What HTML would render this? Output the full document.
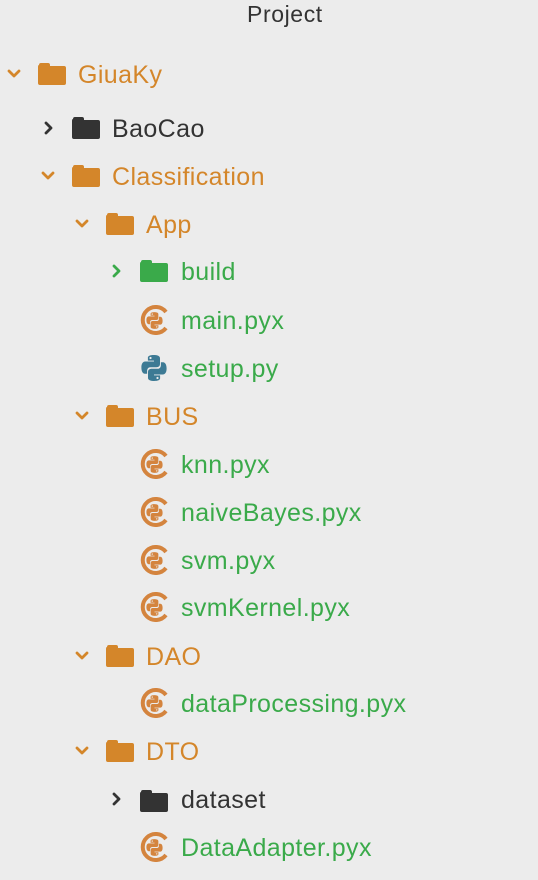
<!DOCTYPE html>
<html><head><meta charset="utf-8"><style>
body{margin:0;width:538px;height:880px;background:#ececec;font-family:"Liberation Sans",sans-serif;position:relative;overflow:hidden}
.t{position:absolute;font-size:25px;line-height:26px;letter-spacing:0.4px;white-space:nowrap;margin-top:2px}
.o{color:#d4862a}.g{color:#3aaa4a}.k{color:#333}
svg.i{position:absolute}
</style></head><body>
<svg width="0" height="0" style="position:absolute">
<defs>
<symbol id="fold" viewBox="0 0 28 22"><path d="M1 2 Q1 0 3 0 H10 Q12 0 12 2 V3 H26 Q28 3 28 5 V20 Q28 22 26 22 H2 Q0 22 0 20 V4 Q0 2 1 2Z" fill="currentColor"/></symbol>
<symbol id="down" viewBox="0 0 14 10"><path d="M2 2 L7 7 L12 2" fill="none" stroke="currentColor" stroke-width="2.8" stroke-linecap="round" stroke-linejoin="round"/></symbol>
<symbol id="right" viewBox="0 0 10 14"><path d="M2 2 L7 7 L2 12" fill="none" stroke="currentColor" stroke-width="2.8" stroke-linecap="round" stroke-linejoin="round"/></symbol>
<symbol id="py" viewBox="0 0 28 28"><path d="M13.8 1C7.5 1 7.9 3.7 7.9 3.7V6.6H14V7.5H5.5S1.4 7 1.4 13.5 5 19.8 5 19.8H7.1V16.8S7 13.2 10.6 13.2H16.6S20 13.3 20 9.9V4.3S20.5 1 13.8 1ZM10.5 2.9A1.1 1.1 0 1 1 10.5 5.1 1.1 1.1 0 1 1 10.5 2.9Z" fill="currentColor"/><path d="M14.2 27C20.5 27 20.1 24.3 20.1 24.3V21.4H14V20.5H22.5S26.6 21 26.6 14.5 23 8.2 23 8.2H20.9V11.2S21 14.8 17.4 14.8H11.4S8 14.7 8 18.1V23.7S7.5 27 14.2 27ZM17.5 25.1A1.1 1.1 0 1 1 17.5 22.9 1.1 1.1 0 1 1 17.5 25.1Z" fill="currentColor"/></symbol>
<symbol id="cy" viewBox="0 0 30 30"><path d="M27 7 A13 13 0 1 0 27 23" fill="none" stroke="#d4843e" stroke-width="4"/><g transform="translate(6.5,6.5) scale(0.6)" color="#d4843e"><use href="#py"/></g></symbol>
</defs></svg>

<div class="t k" style="left:247px;top:-1px;font-size:23px;letter-spacing:0.6px">Project</div>

<svg class="i o" style="left:7px;top:69px" width="14" height="10"><use href="#down"/></svg>
<svg class="i o" style="left:38px;top:63px" width="28" height="22"><use href="#fold"/></svg>
<div class="t o" style="left:78px;top:60px">GiuaKy</div>

<svg class="i k" style="left:44px;top:121px" width="10" height="14"><use href="#right"/></svg>
<svg class="i k" style="left:72px;top:117px" width="28" height="22"><use href="#fold"/></svg>
<div class="t k" style="left:112px;top:114px">BaoCao</div>

<svg class="i o" style="left:41px;top:171px" width="14" height="10"><use href="#down"/></svg>
<svg class="i o" style="left:72px;top:165px" width="28" height="22"><use href="#fold"/></svg>
<div class="t o" style="left:112px;top:162px">Classification</div>

<svg class="i o" style="left:75px;top:219px" width="14" height="10"><use href="#down"/></svg>
<svg class="i o" style="left:106px;top:213px" width="28" height="22"><use href="#fold"/></svg>
<div class="t o" style="left:146px;top:210px">App</div>

<svg class="i g" style="left:112px;top:264px" width="10" height="14"><use href="#right"/></svg>
<svg class="i g" style="left:140px;top:260px" width="28" height="22"><use href="#fold"/></svg>
<div class="t g" style="left:181px;top:257px">build</div>

<svg class="i" style="left:139px;top:305px" width="30" height="30"><use href="#cy"/></svg>
<div class="t g" style="left:181px;top:306px">main.pyx</div>

<svg class="i" style="left:140px;top:354px;color:#3d7a94" width="28" height="28"><use href="#py"/></svg>
<div class="t g" style="left:181px;top:354px">setup.py</div>

<svg class="i o" style="left:75px;top:411px" width="14" height="10"><use href="#down"/></svg>
<svg class="i o" style="left:106px;top:405px" width="28" height="22"><use href="#fold"/></svg>
<div class="t o" style="left:146px;top:402px">BUS</div>

<svg class="i" style="left:139px;top:449px" width="30" height="30"><use href="#cy"/></svg>
<div class="t g" style="left:181px;top:450px">knn.pyx</div>
<svg class="i" style="left:139px;top:497px" width="30" height="30"><use href="#cy"/></svg>
<div class="t g" style="left:181px;top:498px">naiveBayes.pyx</div>
<svg class="i" style="left:139px;top:545px" width="30" height="30"><use href="#cy"/></svg>
<div class="t g" style="left:181px;top:546px">svm.pyx</div>
<svg class="i" style="left:139px;top:592px" width="30" height="30"><use href="#cy"/></svg>
<div class="t g" style="left:181px;top:593px">svmKernel.pyx</div>

<svg class="i o" style="left:75px;top:651px" width="14" height="10"><use href="#down"/></svg>
<svg class="i o" style="left:106px;top:645px" width="28" height="22"><use href="#fold"/></svg>
<div class="t o" style="left:146px;top:642px">DAO</div>

<svg class="i" style="left:139px;top:688px" width="30" height="30"><use href="#cy"/></svg>
<div class="t g" style="left:181px;top:689px">dataProcessing.pyx</div>

<svg class="i o" style="left:75px;top:746px" width="14" height="10"><use href="#down"/></svg>
<svg class="i o" style="left:106px;top:740px" width="28" height="22"><use href="#fold"/></svg>
<div class="t o" style="left:146px;top:737px">DTO</div>

<svg class="i k" style="left:112px;top:792px" width="10" height="14"><use href="#right"/></svg>
<svg class="i k" style="left:140px;top:790px" width="28" height="22"><use href="#fold"/></svg>
<div class="t k" style="left:181px;top:785px">dataset</div>

<svg class="i" style="left:139px;top:832px" width="30" height="30"><use href="#cy"/></svg>
<div class="t g" style="left:181px;top:833px">DataAdapter.pyx</div>
</body></html>
